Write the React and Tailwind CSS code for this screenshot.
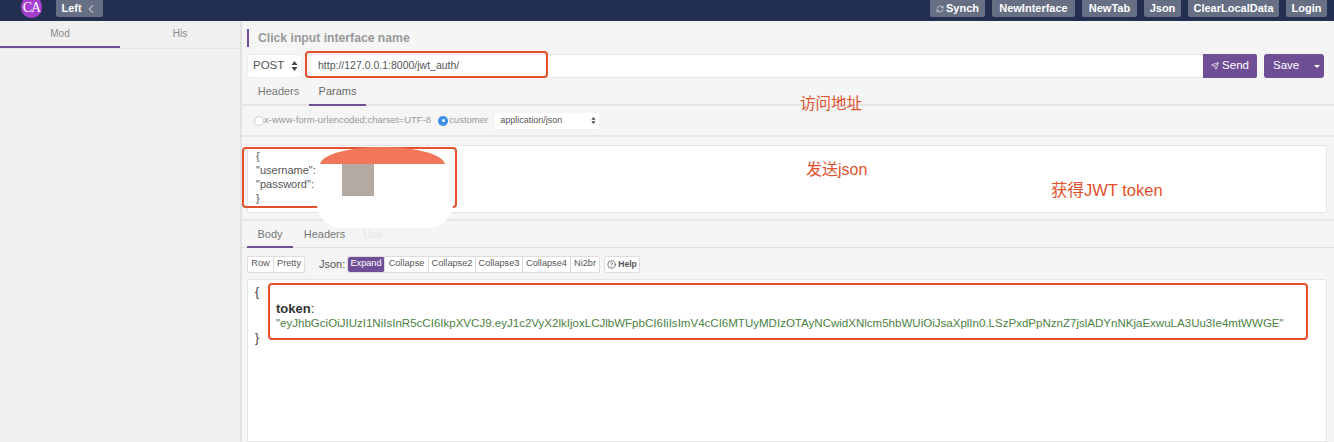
import React from 'react';
import { ChevronLeft, RefreshCw, Send, CircleHelp } from 'lucide-react';

const sans = '"Liberation Sans", "Noto Sans CJK SC", sans-serif';

function TopButton({ children, className = '' }) {
  return (
    <div className={`h-[17px] flex items-center justify-center gap-[2px] bg-[#676f84] rounded-b-[2px] text-white font-bold text-[11px] ${className}`}>
      {children}
    </div>
  );
}

function Tab({ label, active, className = '' }) {
  return (
    <div className={`flex items-center justify-center border-b-2 ${active ? 'border-[#6f4e96]' : 'border-transparent'} ${className}`}>
      {label}
    </div>
  );
}

function GroupButton({ label, active, className = '' }) {
  return (
    <div className={`h-[15px] flex items-center justify-center text-[9.2px] border-r border-[#ddd] last:border-r-0 ${active ? 'bg-[#6f4e96] text-white rounded-[2px]' : 'text-[#555]'} ${className}`}>
      {label}
    </div>
  );
}

// filled up/down arrows of a native select
function SelectArrows({ size = 10 }) {
  return (
    <svg width={size * 0.7} height={size} viewBox="0 0 7 10" fill="#444">
      <path d="M3.5 0 L6.5 4 H0.5 Z" />
      <path d="M3.5 10 L6.5 6 H0.5 Z" />
    </svg>
  );
}

export default function App() {
  return (
    <div className="relative w-[1334px] h-[442px] overflow-hidden flex flex-col bg-[#f5f5f5]" style={{ fontFamily: sans }}>
      {/* top bar */}
      <div className="h-[21px] shrink-0 bg-[#232f50] flex items-start justify-between pl-[21px] pr-[7px] overflow-hidden">
        <div className="flex items-start gap-[14px]">
          <div className="w-[21px] h-[22px] -mt-[4px] pt-[1px] rounded-full bg-[#a63fd0] flex items-center justify-center text-white text-[14px] tracking-[-1px]" style={{ fontFamily: '"Liberation Serif", serif' }}>CA</div>
          <TopButton className="w-[47px]">Left <ChevronLeft size={14} strokeWidth={1.5} /></TopButton>
        </div>
        <div className="flex items-start gap-[7px]">
          <TopButton className="w-[55px]"><RefreshCw size={8} strokeWidth={1.5} />Synch</TopButton>
          <TopButton className="w-[83px]">NewInterface</TopButton>
          <TopButton className="w-[55px]">NewTab</TopButton>
          <TopButton className="w-[37px]">Json</TopButton>
          <TopButton className="w-[91px]">ClearLocalData</TopButton>
          <TopButton className="w-[41px]">Login</TopButton>
        </div>
      </div>

      <div className="flex-1 flex min-h-0">
        {/* sidebar */}
        <div className="w-[242px] shrink-0 bg-[#f0f0f0] border-r-2 border-[#e2e2e2]">
          <div className="h-[28px] flex border-b border-[#e2e2e2] text-[10px] text-[#888]">
            <Tab label="Mod" active className="w-[120px]" />
            <Tab label="His" className="w-[120px]" />
          </div>
        </div>

        {/* main */}
        <div className="flex-1 min-w-0 flex flex-col">
          <div className="h-[33px] shrink-0 flex items-center pl-[5px] pt-[1px]">
            <div className="w-[2px] h-[18px] bg-[#6f4e96]" />
            <div className="ml-[9px] pt-[1px] text-[12.2px] font-bold text-[#999]">Click input interface name</div>
          </div>

          <div className="h-[24px] shrink-0 flex pl-[5px] pr-[10px]">
            <div className="w-[55px] bg-white rounded-[3px] border border-[#eee] flex items-center justify-between pl-[5px] pr-[3px] text-[11.5px] text-[#555]">
              POST <SelectArrows />
            </div>
            <div className="flex-1 ml-[8px] bg-white border-y border-[#e5e5e5] flex items-center pl-[8px] text-[10.5px] text-[#555]">http://127.0.0.1:8000/jwt_auth/</div>
            <div className="w-[54px] bg-[#6f4e96] rounded-r-[2px] flex items-center justify-center gap-[3px] text-white text-[11.5px]">
              <Send size={8} /> Send
            </div>
            <div className="w-[60px] ml-[7px] bg-[#6f4e96] rounded-[3px] flex items-center pl-[9px] text-white text-[11.5px]">
              Save
              <span className="ml-[15px] border-x-[3px] border-t-[3px] border-x-transparent border-t-white" />
            </div>
          </div>

          <div className="h-[28px] shrink-0 flex border-b-2 border-[#e6e6e6] pl-[5px] text-[11px] text-[#777]">
            <Tab label="Headers" className="w-[62px] h-[28px] pl-[1px]" />
            <Tab label="Params" active className="w-[57px] h-[28px] text-[#666]" />
          </div>

          <div className="h-[31px] shrink-0 flex items-center pl-[12px] border-b-2 border-[#e6e6e6] text-[9.5px] text-[#999]">
            <span className="w-[10px] h-[10px] rounded-full border border-[#ccc] bg-white" />
            x-www-form-urlencoded;charset=UTF-8
            <span className="ml-[7px] mr-[1px] w-[10px] h-[10px] rounded-full bg-[#3d8ee8] flex items-center justify-center">
              <span className="w-[3px] h-[3px] rounded-full bg-white" />
            </span>
            customer
            <div className="ml-[7px] w-[104px] h-[16px] bg-white rounded-[3px] flex items-center justify-between pl-[5px] pr-[3px] text-[9px] text-[#555]">
              application/json <SelectArrows size={7} />
            </div>
          </div>

          <div className="h-[84px] shrink-0 pt-[8px] pl-[5px] pr-[7px] border-b-2 border-[#e6e6e6]">
            <div className="h-[68px] bg-white border border-[#e5e5e5] rounded-[2px] pl-[8px] pt-[3px] text-[11px] leading-[14px] text-[#555]">
              <div>{'{'}</div>
              <div>"username": "</div>
              <div>"password": </div>
              <div>{'}'}</div>
            </div>
          </div>

          <div className="h-[27px] shrink-0 flex border-b border-[#e2e2e2] pl-[5px] text-[11px] text-[#777]">
            <Tab label="Body" active className="w-[46px] h-[27px] pt-[2px]" />
            <Tab label="Headers" className="w-[60px] h-[27px] pl-[3px] pt-[2px]" />
            <Tab label="Use" className="w-[36px] h-[27px] text-[#e4e4e4] pl-[4px] pt-[2px]" />
          </div>

          <div className="h-[31px] shrink-0 flex items-center pl-[5px] pt-[1px]">
            <div className="flex bg-white border border-[#ddd] rounded-[2px]">
              <GroupButton label="Row" className="w-[26px]" />
              <GroupButton label="Pretty" className="w-[30px]" />
            </div>
            <span className="ml-[14px] w-[28px] text-[11px] text-[#555]">Json:</span>
            <div className="flex bg-white border border-[#ddd] rounded-[2px]">
              <GroupButton label="Expand" active className="w-[37px]" />
              <GroupButton label="Collapse" className="w-[44px]" />
              <GroupButton label="Collapse2" className="w-[47px]" />
              <GroupButton label="Collapse3" className="w-[47px]" />
              <GroupButton label="Collapse4" className="w-[48px]" />
              <GroupButton label="Ni2br" className="w-[28px]" />
            </div>
            <div className="ml-[4px] w-[36px] h-[17px] bg-white border border-[#ddd] rounded-[2px] flex items-center justify-center gap-[2px] text-[8.5px] font-bold text-[#555]">
              <CircleHelp size={9} /> Help
            </div>
          </div>

          <div className="flex-1 ml-[5px] mr-[7px] bg-white border border-[#e5e5e5] rounded-t-[3px] pl-[7px] pt-[5px] text-[12px] leading-[14px] text-[#333] overflow-hidden">
            <div>{'{'}</div>
            <div className="pl-[21px] pt-[2px]">
              <div className="text-[13px] leading-[15px]"><span className="font-bold">token</span>:</div>
              <div className="text-[11.54px] leading-[14px] text-[#4b7f3f] whitespace-nowrap">"eyJhbGciOiJIUzI1NiIsInR5cCI6IkpXVCJ9.eyJ1c2VyX2lkIjoxLCJlbWFpbCI6IiIsImV4cCI6MTUyMDIzOTAyNCwidXNlcm5hbWUiOiJsaXplIn0.LSzPxdPpNznZ7jslADYnNKjaExwuLA3Uu3Ie4mtWWGE"</div>
            </div>
            <div className="pt-[1px]">{'}'}</div>
          </div>
        </div>
      </div>

      {/* annotations drawn on top of the screenshot */}
      <div className="absolute left-[305px] top-[51px] w-[243px] h-[27px] border-2 border-[#e2512c] rounded-[4px]" />
      <div className="absolute left-[242px] top-[147px] w-[215px] h-[61px] border-2 border-[#e2512c] rounded-[4px]" />
      <div className="absolute left-[268px] top-[283px] w-[1040px] h-[57px] border-2 border-[#e2512c] rounded-[4px]" />

      {/* redaction */}
      <div className="absolute left-[320px] top-[147px] w-[125px] h-[18px] bg-[#f2775a] rounded-t-[62px_18px]" />
      <div className="absolute left-[317px] top-[164px] w-[136px] h-[64px] bg-white rounded-b-[24px] blur-[0.5px]" />
      <div className="absolute left-[342px] top-[164px] w-[32px] h-[32px] bg-[#b5aaa3]" />

      <div className="absolute left-[800px] top-[95px] text-[15.5px] leading-[18px] text-[#e2512c]">访问地址</div>
      <div className="absolute left-[806px] top-[161px] text-[16px] leading-[18px] text-[#e2512c]">发送json</div>
      <div className="absolute left-[1051px] top-[181px] text-[16.5px] leading-[18px] text-[#e2512c]">获得JWT token</div>
    </div>
  );
}
